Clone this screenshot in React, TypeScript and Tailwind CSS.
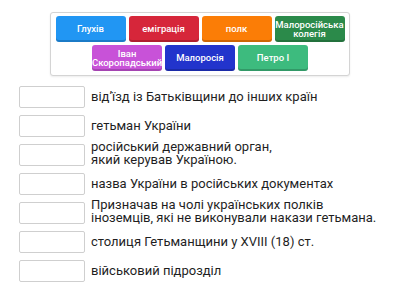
const tilesTop = [
  { label: 'Глухів', color: 'bg-[#2196f3]' },
  { label: 'еміграція', color: 'bg-[#d6263a]' },
  { label: 'полк', color: 'bg-[#fb7d06]' },
  { label: 'Малоросійська колегія', color: 'bg-[#2b8a4a]' },
];

const tilesBottom = [
  { label: 'Іван Скоропадський', color: 'bg-[#c852d8]' },
  { label: 'Малоросія', color: 'bg-[#2234cc]' },
  { label: 'Петро І', color: 'bg-[#3dbb7e]' },
];

const rows: string[][] = [
  ['від’їзд із Батьківщини до інших країн'],
  ['гетьман України'],
  ['російський державний орган,', 'який керував Україною.'],
  ['назва України в російських документах'],
  ['Призначав на чолі українських полків', 'іноземців, які не виконували накази гетьмана.'],
  ['столиця Гетьманщини у XVIII (18) ст.'],
  ['військовий підрозділ'],
];

const Tile = ({ label, color }: { label: string; color: string }) => (
  <div
    className={`${color} flex h-[26px] w-[70px] items-center justify-center rounded-[3px] text-center text-[9.5px] font-medium leading-[9.5px] text-white shadow-[inset_0_-2px_0_rgba(0,0,0,0.18)]`}
  >
    {label}
  </div>
);

export default function App() {
  return (
    <div className="h-[300px] w-[400px] overflow-hidden bg-white font-['Roboto',sans-serif]">
      <div className="mx-auto mt-[12px] flex w-[300px] flex-col gap-[3px] rounded-[3px] border border-[#d4d4d4] bg-white px-[4px] pb-[4px] pt-[3px] shadow-[0_1px_2px_rgba(0,0,0,0.08)]">
        <div className="flex justify-center gap-[3px]">
          {tilesTop.map((t) => (
            <Tile key={t.label} {...t} />
          ))}
        </div>
        <div className="flex justify-center gap-[3px]">
          {tilesBottom.map((t) => (
            <Tile key={t.label} {...t} />
          ))}
        </div>
      </div>

      <div className="mt-[10px] flex flex-col gap-[7px] pl-[19px]">
        {rows.map((lines, i) => (
          <div key={i} className="flex h-[22px] items-center">
            <div className="h-[22px] w-[66px] shrink-0 rounded-[2px] border border-[#cfcfcf] bg-white" />
            <p
              className={`ml-[6px] whitespace-nowrap text-[13px] leading-[13.5px] text-[#1f1f1f] ${
                lines.length > 1 ? '-mt-[4px]' : ''
              }`}
            >
              {lines.map((l, j) => (
                <span key={j} className="block">
                  {l}
                </span>
              ))}
            </p>
          </div>
        ))}
      </div>
    </div>
  );
}
